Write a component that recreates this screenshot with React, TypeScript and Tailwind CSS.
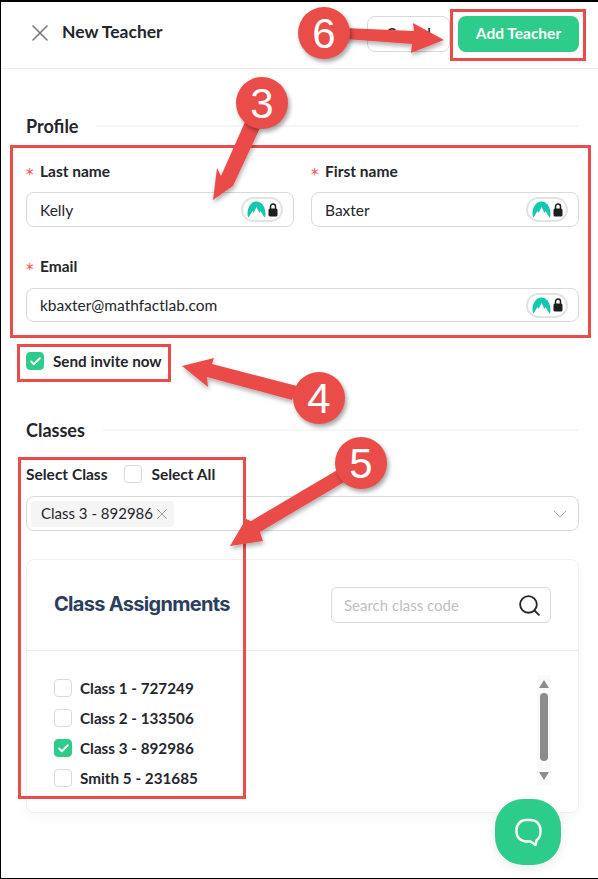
import React from "react";
import { X, Search, ChevronDown, Check } from "lucide-react";

function Shield() {
  return (
    <div className="ml-auto mr-[10px] w-[42px] h-[25px] rounded-full border-2 border-[#e3e3e3] bg-white flex items-center justify-center gap-[2px]">
      <svg width="19" height="17" viewBox="0 0 18 17" preserveAspectRatio="none">
        <path d="M0.5 13 C0.5 5.5 4 0.5 9 0.5 C14 0.5 17.5 5.5 17.5 13 C17.5 14.5 17.2 15.5 16.6 16.5 L12.8 10 L11.8 12 L9 6 L6.2 12 L5.2 10 L1.4 16.5 C0.8 15.5 0.5 14.5 0.5 13 Z" fill="#14c8b0" />
      </svg>
      <svg width="10" height="14" viewBox="0 0 10 14">
        <rect x="0.5" y="5.5" width="9" height="8" rx="1.5" fill="#1f1f1f" />
        <path d="M2.5 6V3.6a2.5 2.5 0 0 1 5 0V6" fill="none" stroke="#1f1f1f" strokeWidth="1.5" />
      </svg>
    </div>
  );
}

function Field({ label, value, className, box = "h-[35px] mt-[11px]" }: { label: string; value: string; className?: string; box?: string }) {
  return (
    <div className={className}>
      <div className="h-[20px] flex items-center text-[15.5px] font-bold text-[#25252d] translate-y-[1px]">
        <span className="text-[#ff4d4f] w-[14px] font-normal text-[15px] leading-none translate-y-[3px] font-['DejaVu_Sans',sans-serif]">*</span>
        {label}
      </div>
      <div className={"rounded-[8px] border border-[#d9d9d9] flex items-center pl-[13px] text-[15.500px] text-[#25252d] " + box}>
        <span className="translate-y-[1px]">{value}</span>
        <Shield />
      </div>
    </div>
  );
}

function Box({ checked }: { checked?: boolean }) {
  return (
    <span
      className={
        "w-[18px] h-[18px] rounded-[4px] shrink-0 flex items-center justify-center border " +
        (checked ? "bg-[#2ecc8a] border-[#2ecc8a]" : "bg-white border-[#d9d9d9]")
      }
    >
      {checked && <Check size={13} strokeWidth={3.5} className="text-white" />}
    </span>
  );
}

function SectionTitle({ title }: { title: string }) {
  return (
    <div className="flex items-center gap-[18px] pr-[19px]">
      <span className="text-[18px] font-bold text-[#25252d] leading-[24px]">{title}</span>
      <span className="grow h-[2px] bg-[#f7f7f7]" />
    </div>
  );
}

function Red({ className }: { className: string }) {
  return <div className={"absolute border-[3px] border-[#ea4c4a] " + className} />;
}

function Badge({ n, className }: { n: string; className: string }) {
  return (
    <div
      className={
        "absolute w-[52px] h-[52px] rounded-full bg-[#ea4c4a] text-white text-[42px] flex items-center justify-center shadow-[2px_3px_4px_rgba(0,0,0,0.35)] font-['Liberation_Sans',sans-serif] " +
        className
      }
    >
      {n}
    </div>
  );
}

export default function App() {
  const classes: [string, boolean][] = [
    ["Class 1 - 727249", false],
    ["Class 2 - 133506", false],
    ["Class 3 - 892986", true],
    ["Smith 5 - 231685", false],
  ];
  return (
    <div className="relative w-[598px] h-[879px] overflow-hidden bg-white border-t-2 border-l border-b border-black font-['Lato',sans-serif]">
      <header className="h-[67px] border-b border-[#ececec] flex items-center pl-[25px] pr-[19px] pb-[3px]">
        <X size={28} strokeWidth={1.3} className="text-[#777] -mt-[2px]" />
        <span className="ml-[8px] -mt-[2px] text-[17.500px] font-bold text-[#25252d]">New Teacher</span>
        <button className="ml-auto w-[83px] h-[36px] rounded-[8px] border border-[#d9d9d9] text-[15px] font-semibold text-[#25252d]">Cancel</button>
        <button className="ml-[8px] w-[121px] h-[36px] rounded-[8px] bg-[#2ecc8a] text-white text-[15.500px] font-bold">Add Teacher</button>
      </header>

      <main className="pl-[25px] pt-[45px]">
        <SectionTitle title="Profile" />
        <div className="mt-[23px] pr-[19px] grid grid-cols-2 gap-x-[17px]">
          <Field label="Last name" value="Kelly" />
          <Field label="First name" value="Baxter" />
          <Field label="Email" value="kbaxter@mathfactlab.com" className="col-span-2 mt-[29px]" box="h-[34px] mt-[12px]" />
        </div>
        <div className="mt-[30px] flex items-center gap-[9px] text-[15.250px] font-bold text-[#25252d] h-[18px]">
          <Box checked />
          Send invite now
        </div>

        <div className="mt-[48px]">
          <SectionTitle title="Classes" />
        </div>
        <div className="mt-[23px] h-[20px] flex items-center text-[15.500px] font-bold text-[#25252d]">
          Select Class
          <span className="ml-[17px] mr-[9px] -mt-[2px]"><Box /></span>
          Select All
        </div>
        <div className="mt-[11px] mr-[19px] h-[35px] rounded-[8px] border border-[#d9d9d9] flex items-center pl-[4px] pr-[6px]">
          <span className="h-[26px] w-[143px] rounded-[4px] bg-[#f5f5f5] flex items-center pl-[10px] text-[15px] text-[#25252d]">
            Class 3 - 892986
            <X size={18} strokeWidth={1.1} className="text-[#888]" />
          </span>
          <ChevronDown size={24} strokeWidth={0.9} className="ml-auto text-[#999]" />
        </div>

        <section className="mt-[28px] mr-[19px] h-[254px] rounded-[8px] border border-[#f0f0f0] shadow-[0_4px_14px_rgba(0,0,0,0.04)]">
          <div className="h-[91px] border-b border-[#ededed] flex items-center pl-[27px] pr-[27px]">
            <span className="pb-[2px] text-[20px] font-bold tracking-[-0.700px] text-[#2c3e5d] font-['Inter',sans-serif]">Class Assignments</span>
            <div className="ml-auto w-[220px] h-[36px] rounded-[6px] border border-[#d9d9d9] flex items-center pl-[12px] pr-[8px] text-[15px] text-[#bfbfbf]">
              Search class code
              <Search size={25} strokeWidth={1.8} className="ml-auto text-[#25252d]" />
            </div>
          </div>
          <div className="flex pl-[27px] pr-[27px] pt-[28px]">
            <div className="flex flex-col gap-[12px] text-[15.250px] font-bold text-[#25252d]">
              {classes.map(([name, on]) => (
                <div key={name} className="h-[18px] flex items-center gap-[8px]">
                  <Box checked={on} />
                  {name}
                </div>
              ))}
            </div>
            <div className="ml-auto -mt-[4px] w-[14px] h-[110px] bg-[#fafafa] flex flex-col items-center justify-between py-[5px]">
              <span className="w-0 h-0 border-x-[5px] border-x-transparent border-b-[8px] border-b-[#8c8c8c]" />
              <span className="w-[8px] h-[68px] mb-[6px] rounded-full bg-[#8c8c8c]" />
              <span className="w-0 h-0 border-x-[5px] border-x-transparent border-t-[8px] border-t-[#8c8c8c]" />
            </div>
          </div>
        </section>
      </main>

      <div className="absolute left-[494px] top-[797px] w-[66px] h-[66px] rounded-[28px] bg-[#2ecc8a] flex items-center justify-center shadow-[0_4px_12px_rgba(0,0,0,0.08)]">
        <svg width="30" height="30" viewBox="0 0 30 30" fill="none">
          <path d="M13 3h5a9.5 9.5 0 0 1 9.500 9.500v2c0 4-1.500 7-4 9l-1 4.500-5-3.500h-4.500a9.500 9.500 0 0 1-9.500-9.500v-2.500a9.500 9.500 0 0 1 9.500-9.500z" stroke="#fff" strokeWidth="2.400" strokeLinejoin="round" />
        </svg>
      </div>

      <Red className="left-[449px] top-[7px] w-[136px] h-[52px]" />
      <Red className="left-[9px] top-[143px] w-[581px] h-[193px]" />
      <Red className="left-[16px] top-[342px] w-[154px] h-[38px]" />
      <Red className="left-[17px] top-[455px] w-[228px] h-[342px]" />

      <svg className="absolute left-[-1px] top-[-2px] pointer-events-none" width="598" height="879" viewBox="0 0 598 879">
        <defs>
          <filter id="s" x="-20%" y="-20%" width="140%" height="140%">
            <feDropShadow dx="1" dy="3" stdDeviation="2" floodColor="#000" floodOpacity="0.3" />
          </filter>
        </defs>
        <g fill="#ea4c4a" filter="url(#s)">
          <polygon points="345,28 414,31 413,23 444,40 411,53 412,44 345,39" />
          <polygon points="245,122 260,128 233,186 240,181 213,200 217,168 221,176" />
          <polygon points="297,386 292,400 207,377 208,387 182,366 214,358 212,364" />
          <polygon points="339,469 346,481 260,532 263,541 230,546 246,519 251,521" />
        </g>
      </svg>

      <Badge n="6" className="left-[297px] top-[5px]" />
      <Badge n="3" className="left-[235px] top-[75px]" />
      <Badge n="4" className="left-[292px] top-[370px]" />
      <Badge n="5" className="left-[334px] top-[435px]" />
    </div>
  );
}
